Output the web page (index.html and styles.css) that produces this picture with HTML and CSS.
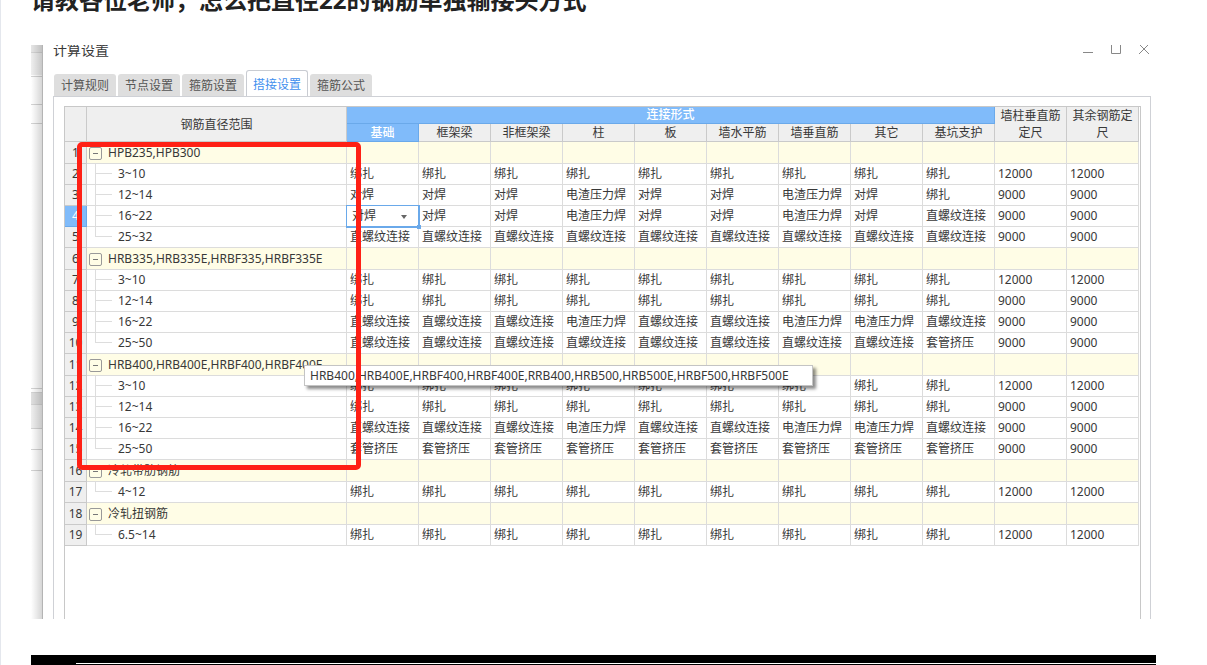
FILE: index.html
```
<!DOCTYPE html>
<html lang="zh-CN">
<head>
<meta charset="utf-8">
<title>请教各位老师，怎么把直径22的钢筋单独输接头方式</title>
<link rel="stylesheet" href="styles.css">
</head>
<body>
<main class="post">
<h1 class="post-title">请教各位老师，怎么把直径22的钢筋单独输接头方式</h1>
<section class="shot">
<svg class="backdrop" width="11" height="574" viewBox="0 0 11 574" aria-hidden="true">
<defs><linearGradient id="fade" x1="0" x2="1" y1="0" y2="0"><stop offset="0" stop-color="#000" stop-opacity="0"/><stop offset="1" stop-color="#000" stop-opacity=".16"/></linearGradient></defs>
<path fill="#e6e6e6" d="M0 0h11v7H0z"/><path fill="#efefef" d="M0 8h11v22H0zM0 348h11v36H0z"/><path fill="#e0e0e0" d="M0 348h11v11H0z"/>
<path stroke="#d4d4d4" d="M0 7.500h11M0 31.500h11M0 59.500h11M0 78.500h11M0 343.500h11M0 347.500h11M0 359.500h11M0 383.500h11M0 404.500h11M0 425.500h11"/>
<path fill="url(#fade)" d="M0 0h11v574H0z"/>
</svg>
<div class="window">
<header class="titlebar">
<span class="window-title">计算设置</span>
<div class="controls">
<button type="button" aria-label="最小化"><svg width="12" height="12" viewBox="0 0 12 12"><path d="M1 9.500h10"/></svg></button>
<button type="button" aria-label="最大化"><svg width="12" height="12" viewBox="0 0 12 12"><path d="M1.500 0v10.500h9V0"/></svg></button>
<button type="button" aria-label="关闭"><svg width="12" height="12" viewBox="0 0 12 12"><path d="M1 1l10 10M11 1L1 11"/></svg></button>
</div>
</header>
<nav class="tabs">
<button type="button" class="tab">计算规则</button>
<button type="button" class="tab">节点设置</button>
<button type="button" class="tab">箍筋设置</button>
<button type="button" class="tab active">搭接设置</button>
<button type="button" class="tab">箍筋公式</button>
</nav>
<div class="panel">
<div class="grid-wrap">
<table class="grid">
<colgroup><col class="col-no"><col class="col-range"><col span="11"></colgroup>
<thead>
<tr><th rowspan="2"></th><th rowspan="2">钢筋直径范围</th><th colspan="9" class="picked">连接形式</th><th rowspan="2">墙柱垂直筋定尺</th><th rowspan="2">其余钢筋定尺</th></tr>
<tr class="sub"><th class="picked">基础</th><th>框架梁</th><th>非框架梁</th><th>柱</th><th>板</th><th>墙水平筋</th><th>墙垂直筋</th><th>其它</th><th>基坑支护</th></tr>
</thead>
<tbody>
<tr class="group"><th>1</th><td><button type="button" class="toggle" aria-label="折叠"></button>HPB235,HPB300</td><td></td><td></td><td></td><td></td><td></td><td></td><td></td><td></td><td></td><td></td><td></td></tr>
<tr><th>2</th><td class="leaf">3~10</td><td>绑扎</td><td>绑扎</td><td>绑扎</td><td>绑扎</td><td>绑扎</td><td>绑扎</td><td>绑扎</td><td>绑扎</td><td>绑扎</td><td>12000</td><td>12000</td></tr>
<tr><th>3</th><td class="leaf">12~14</td><td>对焊</td><td>对焊</td><td>对焊</td><td>电渣压力焊</td><td>对焊</td><td>对焊</td><td>电渣压力焊</td><td>对焊</td><td>绑扎</td><td>9000</td><td>9000</td></tr>
<tr><th class="picked">4</th><td class="leaf">16~22</td><td class="editing"><select class="joint" aria-label="16~22 基础连接形式"><option>对焊</option><option>绑扎</option><option>电渣压力焊</option><option>直螺纹连接</option></select><svg class="caret" width="6" height="4" viewBox="0 0 6 4" aria-hidden="true"><path d="M0 0h6L3 4z"/></svg><i class="handle"></i></td><td>对焊</td><td>对焊</td><td>电渣压力焊</td><td>对焊</td><td>对焊</td><td>电渣压力焊</td><td>对焊</td><td>直螺纹连接</td><td>9000</td><td>9000</td></tr>
<tr><th>5</th><td class="leaf last">25~32</td><td>直螺纹连接</td><td>直螺纹连接</td><td>直螺纹连接</td><td>直螺纹连接</td><td>直螺纹连接</td><td>直螺纹连接</td><td>直螺纹连接</td><td>直螺纹连接</td><td>直螺纹连接</td><td>9000</td><td>9000</td></tr>
<tr class="group"><th>6</th><td><button type="button" class="toggle" aria-label="折叠"></button>HRB335,HRB335E,HRBF335,HRBF335E</td><td></td><td></td><td></td><td></td><td></td><td></td><td></td><td></td><td></td><td></td><td></td></tr>
<tr><th>7</th><td class="leaf">3~10</td><td>绑扎</td><td>绑扎</td><td>绑扎</td><td>绑扎</td><td>绑扎</td><td>绑扎</td><td>绑扎</td><td>绑扎</td><td>绑扎</td><td>12000</td><td>12000</td></tr>
<tr><th>8</th><td class="leaf">12~14</td><td>绑扎</td><td>绑扎</td><td>绑扎</td><td>绑扎</td><td>绑扎</td><td>绑扎</td><td>绑扎</td><td>绑扎</td><td>绑扎</td><td>9000</td><td>9000</td></tr>
<tr><th>9</th><td class="leaf">16~22</td><td>直螺纹连接</td><td>直螺纹连接</td><td>直螺纹连接</td><td>电渣压力焊</td><td>直螺纹连接</td><td>直螺纹连接</td><td>电渣压力焊</td><td>电渣压力焊</td><td>直螺纹连接</td><td>9000</td><td>9000</td></tr>
<tr><th>10</th><td class="leaf last">25~50</td><td>直螺纹连接</td><td>直螺纹连接</td><td>直螺纹连接</td><td>直螺纹连接</td><td>直螺纹连接</td><td>直螺纹连接</td><td>直螺纹连接</td><td>直螺纹连接</td><td>套管挤压</td><td>9000</td><td>9000</td></tr>
<tr class="group"><th>11</th><td><button type="button" class="toggle" aria-label="折叠"></button>HRB400,HRB400E,HRBF400,HRBF400E</td><td></td><td></td><td></td><td></td><td></td><td></td><td></td><td></td><td></td><td></td><td></td></tr>
<tr><th>12</th><td class="leaf">3~10</td><td>绑扎</td><td>绑扎</td><td>绑扎</td><td>绑扎</td><td>绑扎</td><td>绑扎</td><td>绑扎</td><td>绑扎</td><td>绑扎</td><td>12000</td><td>12000</td></tr>
<tr><th>13</th><td class="leaf">12~14</td><td>绑扎</td><td>绑扎</td><td>绑扎</td><td>绑扎</td><td>绑扎</td><td>绑扎</td><td>绑扎</td><td>绑扎</td><td>绑扎</td><td>9000</td><td>9000</td></tr>
<tr><th>14</th><td class="leaf">16~22</td><td>直螺纹连接</td><td>直螺纹连接</td><td>直螺纹连接</td><td>电渣压力焊</td><td>直螺纹连接</td><td>直螺纹连接</td><td>电渣压力焊</td><td>电渣压力焊</td><td>直螺纹连接</td><td>9000</td><td>9000</td></tr>
<tr><th>15</th><td class="leaf last">25~50</td><td>套管挤压</td><td>套管挤压</td><td>套管挤压</td><td>套管挤压</td><td>套管挤压</td><td>套管挤压</td><td>套管挤压</td><td>套管挤压</td><td>套管挤压</td><td>9000</td><td>9000</td></tr>
<tr class="group"><th>16</th><td><button type="button" class="toggle" aria-label="折叠"></button>冷轧带肋钢筋</td><td></td><td></td><td></td><td></td><td></td><td></td><td></td><td></td><td></td><td></td><td></td></tr>
<tr><th>17</th><td class="leaf last">4~12</td><td>绑扎</td><td>绑扎</td><td>绑扎</td><td>绑扎</td><td>绑扎</td><td>绑扎</td><td>绑扎</td><td>绑扎</td><td>绑扎</td><td>12000</td><td>12000</td></tr>
<tr class="group"><th>18</th><td><button type="button" class="toggle" aria-label="折叠"></button>冷轧扭钢筋</td><td></td><td></td><td></td><td></td><td></td><td></td><td></td><td></td><td></td><td></td><td></td></tr>
<tr><th>19</th><td class="leaf last">6.5~14</td><td>绑扎</td><td>绑扎</td><td>绑扎</td><td>绑扎</td><td>绑扎</td><td>绑扎</td><td>绑扎</td><td>绑扎</td><td>绑扎</td><td>12000</td><td>12000</td></tr>
</tbody>
</table>
</div>
</div>
</div>
<div class="tooltip" role="tooltip">HRB400,HRB400E,HRBF400,HRBF400E,RRB400,HRB500,HRB500E,HRBF500,HRBF500E</div>
<div class="marker"></div>
</section>
<section class="next-shot"><div class="next-line"></div></section>
</main>
</body>
</html>
```
FILE: styles.css
```
* {
  box-sizing: border-box;
}

body {
  margin: 0;
  background: #fff;
  color: #383838;
  font-family: "Noto Sans", "Noto Sans CJK SC", sans-serif;
  font-size: 12px;
  overflow: hidden;
}

button,
select {
  margin: 0;
  padding: 0;
  border: 0;
  background: none;
  color: inherit;
  font: inherit;
}

.post {
  padding: 0 51px 0 30px;
  border-left: 1px solid #e4e7ed;
}

.post-title {
  margin: -18px 0 27px;
  color: #222;
  font-size: 24px;
  font-weight: 700;
  line-height: 36px;
}

.shot {
  position: relative;
  display: flex;
  overflow: hidden;
}

.backdrop {
  flex: none;
}

.window {
  flex: 1;
  display: flex;
  flex-direction: column;
  padding: 0 5px 0 10px;
  border-left: 1px solid #b4b4b4;
}

.titlebar {
  display: flex;
  justify-content: space-between;
  height: 25px;
  padding-right: 1px;
}

.window-title {
  margin-top: -5px;
  font-size: 14px;
  line-height: 20px;
}

.controls {
  display: flex;
  gap: 16px;
  margin-top: -2px;
}

.controls button {
  display: flex;
  height: 12px;
}

.controls path {
  fill: none;
  stroke: #888;
}

.tabs {
  display: flex;
  align-items: flex-end;
  gap: 2px;
  height: 27px;
  margin-bottom: -1px;
  padding-left: 1px;
}

.tab {
  height: 22px;
  margin-bottom: 1px;
  padding: 1px 7px 0;
  border-radius: 3px 3px 0 0;
  background: #dedede;
  color: #555;
  line-height: 21px;
  white-space: nowrap;
}

.tab.active {
  height: 27px;
  margin: 0;
  padding: 1px 6px 0;
  border: 1px solid #c9ccd2;
  border-bottom: 0;
  background: #fff;
  color: #3f8fee;
}

.panel {
  flex: 1;
  display: flex;
  padding: 9px 9px 0 10px;
  border: 1px solid #cfd1d6;
  border-bottom: 0;
}

.grid-wrap {
  flex: 1;
  padding-right: 1px;
  border: 1px solid #c8c8c8;
  border-bottom: 0;
}

.grid {
  width: 100%;
  table-layout: fixed;
  border-collapse: separate;
  border-spacing: 0;
}

.col-no {
  width: 22px;
}

.col-range {
  width: 260px;
}

.grid th,
.grid td {
  height: 21px;
  padding: 0 0 0 3px;
  border: solid #dcdcdc;
  border-width: 0 1px 1px 0;
  font-weight: 400;
  line-height: 20px;
  text-align: left;
  white-space: nowrap;
}

.grid th {
  padding: 0;
  border-color: #cacaca;
  background: #efefef;
  text-align: center;
}

.grid thead th {
  height: 17px;
  line-height: 17px;
  white-space: normal;
}

.grid thead .picked,
.grid .sub th {
  line-height: 16px;
}

.grid .sub th {
  height: 18px;
}

.grid th.picked {
  border-color: #6aa9ea;
  background: #80bbfa;
  color: #fff;
}

.grid thead th.picked {
  font-weight: 500;
}

.grid .group th,
.grid .group td {
  height: 22px;
  padding-left: 2px;
  line-height: 21px;
}

.grid .group th {
  padding: 0;
}

.grid .group td {
  background: #fffde6;
}

.toggle {
  width: 13px;
  height: 13px;
  margin-right: 6px;
  border: 1px solid #999;
  border-radius: 2px;
  background: linear-gradient(#777, #777) center / 5px 1px no-repeat;
  vertical-align: -2px;
}

.grid .leaf {
  padding-left: 31px;
  background:
    linear-gradient(#ddd, #ddd) 8px 0 / 1px 100% no-repeat,
    linear-gradient(#ddd, #ddd) 8px 9px / 17px 1px no-repeat;
}

.grid .leaf.last {
  background:
    linear-gradient(#ddd, #ddd) 8px 0 / 1px 10px no-repeat,
    linear-gradient(#ddd, #ddd) 8px 9px / 17px 1px no-repeat;
}

.grid .editing {
  position: relative;
  padding: 0;
  outline: 1px solid #6aa9ea;
  border-color: #6aa9ea;
}

.joint {
  display: block;
  width: 100%;
  height: 20px;
  padding-left: 5px;
  appearance: none;
}

.caret {
  position: absolute;
  top: 9px;
  right: 11px;
  fill: #666;
}

.handle {
  position: absolute;
  right: -3px;
  bottom: -3px;
  width: 4px;
  height: 4px;
  background: #6aa9ea;
}

.tooltip {
  position: absolute;
  top: 320px;
  left: 273px;
  padding: 0 23px 0 5px;
  border: 1px solid #c4c4c4;
  background: #fff;
  box-shadow: 3px 3px 3px rgba(0, 0, 0, 0.45);
  line-height: 19px;
  white-space: nowrap;
}

.marker {
  position: absolute;
  top: 97px;
  left: 46px;
  width: 284px;
  height: 328px;
  border: 5px solid #ff2015;
  border-radius: 5px;
}

.next-shot {
  margin-top: 36px;
  padding: 8px 0 12px 45px;
  background: #000;
}

.next-line {
  height: 1px;
  background: #fff;
}
```
